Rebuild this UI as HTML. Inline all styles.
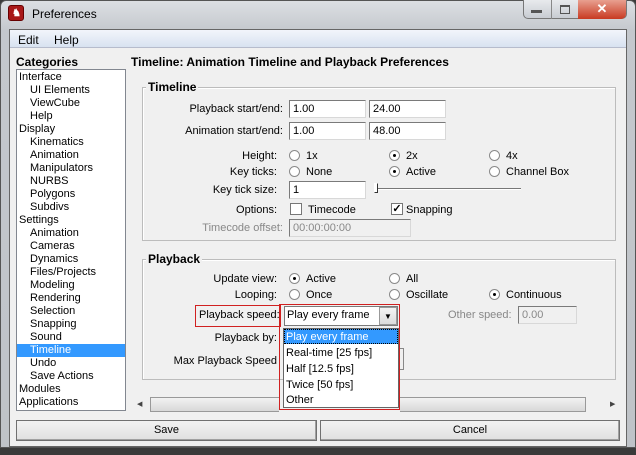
<!DOCTYPE html>
<html><head><style>
*{margin:0;padding:0;box-sizing:border-box}
body{width:636px;height:455px;overflow:hidden;background:#3a3a3a;font-family:"Liberation Sans",sans-serif;font-size:11px;color:#000;position:relative}
.a{position:absolute;white-space:nowrap}
.r{text-align:right}
.inp{position:absolute;background:#fff;border:1px solid #7a7a7a;border-right-color:#d8d8d8;border-bottom-color:#d8d8d8;height:18px;padding:2px 3px;font-size:11px}
.dis{background:#f0f0f0;color:#888}
.rad{position:absolute;width:11px;height:11px;border-radius:50%;border:1px solid #8a8a8a;background:#fff}
.rad.on::after{content:"";position:absolute;left:3px;top:3px;width:3px;height:3px;background:#000;border-radius:50%}
.chk{position:absolute;width:12px;height:12px;border:1px solid #777;background:#fff}
.grp{position:absolute;border:1px solid #bcbcbc;box-shadow:inset 1px 1px 0 #fff}
.gl{position:absolute;background:#f0f0f0;font-weight:bold;font-size:12px;padding:0 2px}
.btn{position:absolute;border:1px solid #707070;background:linear-gradient(#f2f2f2,#e0e0e0);text-align:center;line-height:18px;box-shadow:inset -1px -1px 0 #a0a0a0}
.li{position:absolute;left:2px;height:13px;line-height:13px}
</style></head><body>
<div class="a" style="left:0;top:0;width:636px;height:448px;background:linear-gradient(#dcdfe3,#c4c8cd 30px,#bfc3c8);border-radius:6px 6px 0 0;border:1px solid #555"></div>
<div class="a" style="left:8px;top:5px;width:16px;height:16px;background:#a81818;border-radius:3px;border:1px solid #600"></div>
<div class="a" style="left:12px;top:8px;color:#fff;font-size:10px;font-weight:bold">♞</div>
<div class="a" style="left:32px;top:7px;font-size:12px">Preferences</div>
<div class="a" style="left:523px;top:0;width:104px;height:19px;border:1px solid #777;border-top:none;border-radius:0 0 5px 5px;background:linear-gradient(#e8eaed,#c8ccd2)"></div>
<div class="a" style="left:551px;top:0;width:1px;height:19px;background:#888"></div>
<div class="a" style="left:578px;top:0;width:48px;height:19px;background:linear-gradient(#e8a090,#c83a22);border-radius:0 0 5px 0;color:#fff;text-align:center;font-weight:bold;font-size:13px;line-height:18px">✕</div>
<div class="a" style="left:531px;top:10px;width:11px;height:3px;background:#555"></div>
<div class="a" style="left:560px;top:5px;width:10px;height:9px;border:1px solid #555;border-top-width:2px"></div>
<div class="a" style="left:9px;top:29px;width:618px;height:418px;background:#f0f0f0;border:1px solid #666"></div>
<div class="a" style="left:10px;top:30px;width:616px;height:18px;background:linear-gradient(#f2f5fb,#d8e2f0);border-bottom:1px solid #b6bccc"></div>
<div class="a" style="left:18px;top:33px;font-size:12px">Edit</div>
<div class="a" style="left:54px;top:33px;font-size:12px">Help</div>
<div class="a" style="left:16px;top:55px;font-size:12px;font-weight:bold">Categories</div>
<div class="a" style="left:131px;top:55px;font-size:12px;font-weight:bold">Timeline: Animation Timeline and Playback Preferences</div>
<div class="a" style="left:16px;top:69px;width:110px;height:342px;background:#fff;border:1px solid #828790">
<div class="li" style="top:1px">Interface</div>
<div class="li" style="top:14px;left:13px">UI Elements</div>
<div class="li" style="top:27px;left:13px">ViewCube</div>
<div class="li" style="top:40px;left:13px">Help</div>
<div class="li" style="top:53px">Display</div>
<div class="li" style="top:66px;left:13px">Kinematics</div>
<div class="li" style="top:79px;left:13px">Animation</div>
<div class="li" style="top:92px;left:13px">Manipulators</div>
<div class="li" style="top:105px;left:13px">NURBS</div>
<div class="li" style="top:118px;left:13px">Polygons</div>
<div class="li" style="top:131px;left:13px">Subdivs</div>
<div class="li" style="top:144px">Settings</div>
<div class="li" style="top:157px;left:13px">Animation</div>
<div class="li" style="top:170px;left:13px">Cameras</div>
<div class="li" style="top:183px;left:13px">Dynamics</div>
<div class="li" style="top:196px;left:13px">Files/Projects</div>
<div class="li" style="top:209px;left:13px">Modeling</div>
<div class="li" style="top:222px;left:13px">Rendering</div>
<div class="li" style="top:235px;left:13px">Selection</div>
<div class="li" style="top:248px;left:13px">Snapping</div>
<div class="li" style="top:261px;left:13px">Sound</div>
<div class="li" style="top:274px;left:0;width:108px;padding-left:13px;background:#3399ff;color:#fff">Timeline</div>
<div class="li" style="top:287px;left:13px">Undo</div>
<div class="li" style="top:300px;left:13px">Save Actions</div>
<div class="li" style="top:313px">Modules</div>
<div class="li" style="top:326px">Applications</div>
</div>

<div class="grp" style="left:142px;top:87px;width:474px;height:154px"></div>
<div class="gl" style="left:146px;top:80px">Timeline</div>
<div class="a r" style="left:150px;width:133px;top:103px">Playback start/end:</div>
<div class="inp" style="left:289px;top:100px;width:77px">1.00</div>
<div class="inp" style="left:369px;top:100px;width:77px">24.00</div>
<div class="a r" style="left:150px;width:133px;top:125px">Animation start/end:</div>
<div class="inp" style="left:289px;top:122px;width:77px">1.00</div>
<div class="inp" style="left:369px;top:122px;width:77px">48.00</div>
<div class="a r" style="left:150px;width:127px;top:150px">Height:</div>
<div class="rad" style="left:289px;top:150px"></div><div class="a" style="left:306px;top:150px">1x</div>
<div class="rad on" style="left:389px;top:150px"></div><div class="a" style="left:406px;top:150px">2x</div>
<div class="rad" style="left:489px;top:150px"></div><div class="a" style="left:506px;top:150px">4x</div>
<div class="a r" style="left:150px;width:127px;top:166px">Key ticks:</div>
<div class="rad" style="left:289px;top:166px"></div><div class="a" style="left:306px;top:166px">None</div>
<div class="rad on" style="left:389px;top:166px"></div><div class="a" style="left:406px;top:166px">Active</div>
<div class="rad" style="left:489px;top:166px"></div><div class="a" style="left:506px;top:166px">Channel Box</div>
<div class="a r" style="left:150px;width:127px;top:184px">Key tick size:</div>
<div class="inp" style="left:289px;top:181px;width:77px">1</div>
<div class="a" style="left:376px;top:188px;width:145px;height:2px;background:#777;border-bottom:1px solid #fff"></div>
<div class="a" style="left:374px;top:183px;width:4px;height:10px;background:#fff;border:1px solid #333;border-left-color:#fff;border-top-color:#fff"></div>
<div class="a r" style="left:150px;width:127px;top:204px">Options:</div>
<div class="chk" style="left:290px;top:203px"></div><div class="a" style="left:308px;top:204px">Timecode</div>
<div class="chk" style="left:391px;top:203px;font-size:11px;line-height:10px;text-align:center;font-weight:bold">✓</div><div class="a" style="left:406px;top:204px">Snapping</div>
<div class="a r" style="left:150px;width:133px;top:222px;color:#888">Timecode offset:</div>
<div class="inp dis" style="left:289px;top:219px;width:122px">00:00:00:00</div>

<div class="grp" style="left:142px;top:259px;width:474px;height:121px"></div>
<div class="gl" style="left:146px;top:252px">Playback</div>
<div class="a r" style="left:150px;width:127px;top:273px">Update view:</div>
<div class="rad on" style="left:289px;top:273px"></div><div class="a" style="left:306px;top:273px">Active</div>
<div class="rad" style="left:389px;top:273px"></div><div class="a" style="left:406px;top:273px">All</div>
<div class="a r" style="left:150px;width:127px;top:289px">Looping:</div>
<div class="rad" style="left:289px;top:289px"></div><div class="a" style="left:306px;top:289px">Once</div>
<div class="rad" style="left:389px;top:289px"></div><div class="a" style="left:406px;top:289px">Oscillate</div>
<div class="rad on" style="left:489px;top:289px"></div><div class="a" style="left:506px;top:289px">Continuous</div>
<div class="a" style="left:195px;top:305px;width:86px;height:22px;border:1px solid #d02020"></div>
<div class="a" style="left:199px;top:309px">Playback speed:</div>
<div class="a" style="left:284px;top:306px;width:114px;height:20px;background:#fff;border:1px solid #7a7a7a"></div>
<div class="a" style="left:287px;top:309px">Play every frame</div>
<div class="a" style="left:379px;top:307px;width:18px;height:18px;background:linear-gradient(#f4f4f4,#dcdcdc);border:1px solid #999;text-align:center;font-size:8px;line-height:17px">▼</div>
<div class="a" style="left:448px;top:309px;color:#888">Other speed:</div>
<div class="inp dis" style="left:518px;top:306px;width:59px">0.00</div>
<div class="a r" style="left:150px;width:127px;top:332px">Playback by:</div>
<div class="a r" style="left:150px;width:127px;top:355px">Max Playback Speed</div>
<div class="a" style="left:396px;top:348px;width:8px;height:22px;border:1px solid #888;border-left:none;background:#f0f0f0"></div>
<div class="a" style="left:283px;top:328px;width:116px;height:80px;background:#fff;border:1px solid #666"></div>
<div class="a" style="left:284px;top:329px;width:114px;height:15px;background:#3399ff;outline:1px dotted #000;outline-offset:-1px"></div>
<div class="a" style="left:286px;top:331px;color:#fff">Play every frame</div>
<div class="a" style="left:286px;top:347px">Real-time [25 fps]</div>
<div class="a" style="left:286px;top:363px">Half [12.5 fps]</div>
<div class="a" style="left:286px;top:379px">Twice [50 fps]</div>
<div class="a" style="left:286px;top:394px">Other</div>
<div class="a" style="left:279px;top:304px;width:121px;height:106px;border:1px solid #d02020"></div>
<div class="a" style="left:131px;top:396px;width:148px;height:17px;background:#f0f0f0"></div>
<div class="a" style="left:137px;top:400px;font-size:7px;color:#444">◀</div>
<div class="a" style="left:150px;top:397px;width:129px;height:15px;border:1px solid #999;border-right:none;background:linear-gradient(#f2f2f2,#d8d8d8)"></div>
<div class="a" style="left:400px;top:397px;width:186px;height:15px;border:1px solid #999;border-left:none;background:linear-gradient(#f2f2f2,#d8d8d8)"></div>
<div class="a" style="left:610px;top:400px;font-size:7px;color:#444">▶</div>
<div class="btn" style="left:16px;top:420px;width:301px;height:21px">Save</div>
<div class="btn" style="left:320px;top:420px;width:300px;height:21px">Cancel</div>
</body></html>
